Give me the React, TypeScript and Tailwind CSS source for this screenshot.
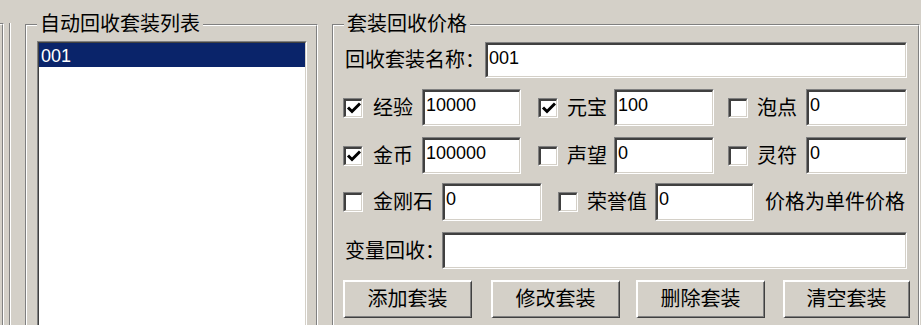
import type { ReactNode } from 'react';

const font = { fontFamily: "'Liberation Sans', 'Noto Sans CJK SC', sans-serif" };

function Sunken({ className = '', children }: { className?: string; children?: ReactNode }) {
  return (
    <div className={`border-t border-l border-b border-r border-t-[#808080] border-l-[#808080] border-b-white border-r-white ${className}`}>
      <div className="h-full w-full border-t-2 border-l-2 border-b border-r border-t-[#404040] border-l-[#404040] border-b-[#d4d0c8] border-r-[#d4d0c8] bg-white overflow-hidden">
        {children}
      </div>
    </div>
  );
}

function Field({ w, value = '' }: { w: string; value?: string }) {
  return (
    <Sunken className={`${w} h-full`}>
      <div className="pl-[1px] pt-[3px] text-[18px] leading-[21px] text-black">{value}</div>
    </Sunken>
  );
}

function CheckBox({ checked }: { checked?: boolean }) {
  return (
    <Sunken className="w-[20px] h-[20px] shrink-0">
      {checked && (
        <svg viewBox="0 0 16 16" className="w-[16px] h-[16px]">
          <path d="M2 6.5 L6 10.5 L14 2.5" fill="none" stroke="#000" strokeWidth="3" />
        </svg>
      )}
    </Sunken>
  );
}

function Button({ w, label, className = '' }: { w: string; label: string; className?: string }) {
  return (
    <div className={`${w} h-full border-t-2 border-l-2 border-b border-r border-t-white border-l-white border-b-[#404040] border-r-[#404040] ${className}`}>
      <div className="h-full w-full border-b border-r border-b-[#808080] border-r-[#808080] flex items-center justify-center text-[20px] text-black">
        {label}
      </div>
    </div>
  );
}

function Label({ w, text, className = '' }: { w: string; text: string; className?: string }) {
  return <div className={`${w} shrink-0 text-[20px] leading-[24px] text-black whitespace-nowrap ${className}`}>{text}</div>;
}

function GroupBox({ w, title, className = '', children }: { w: string; title: string; className?: string; children?: ReactNode }) {
  return (
    <div className={`relative ${w} mt-[24px] border-t border-l border-r border-t-[#808080] border-l-[#808080] border-r-white ${className}`}>
      <div className="absolute left-[11px] top-[-13px] px-[3px] bg-[#d4d0c8] text-[20px] leading-[24px] text-black z-10">{title}</div>
      <div className="h-full border-t border-l border-r border-t-white border-l-white border-r-[#808080]">{children}</div>
    </div>
  );
}

export default function App() {
  return (
    <div className="w-[921px] h-[325px] overflow-hidden bg-[#d4d0c8] flex" style={font}>
      {/* edge of the neighbouring panel */}
      <div className="w-[4px] mt-[23px] border-t border-r border-t-[#808080] border-r-white">
        <div className="h-full border-t border-r border-t-white border-r-[#808080]" />
      </div>
      <div className="w-[2px] ml-[5px] mt-[23px] border-l border-r border-l-[#808080] border-r-white" />

      {/* 自动回收套装列表 */}
      <GroupBox w="w-[293px]" title="自动回收套装列表" className="ml-[14px]">
        <div className="pl-[10px] pr-[9px] pt-[15px]">
          <div className="h-[300px] border-t border-l border-b border-r border-t-[#808080] border-l-[#808080] border-b-white border-r-white">
            <div className="h-full border-t border-l border-b border-r border-t-[#404040] border-l-[#404040] border-b-[#d4d0c8] border-r-[#d4d0c8] bg-white">
              <div className="h-[24px] bg-[#0a246a] text-white text-[18px] leading-[22px] pt-[2px] pl-[2px]">001</div>
            </div>
          </div>
        </div>
      </GroupBox>

      {/* 套装回收价格 */}
      <GroupBox w="w-[588px]" title="套装回收价格" className="ml-[14px]">
        <div className="pt-[16px] flex flex-col">
          <div className="flex items-center h-[36px]">
            <Label w="w-[140px]" text="回收套装名称：" className="ml-[11px]" />
            <Field w="w-[422px]" value="001" />
          </div>

          <div className="flex items-center h-[37px] mt-[11px]">
            <div className="ml-[9px]"><CheckBox checked /></div>
            <Label w="w-[59px]" text="经验" className="pl-[10px]" />
            <Field w="w-[99px]" value="10000" />
            <div className="ml-[17px]"><CheckBox checked /></div>
            <Label w="w-[56px]" text="元宝" className="pl-[9px]" />
            <Field w="w-[100px]" value="100" />
            <div className="ml-[14px]"><CheckBox /></div>
            <Label w="w-[58px]" text="泡点" className="pl-[9px]" />
            <Field w="w-[101px]" value="0" />
          </div>

          <div className="flex items-center h-[37px] mt-[11px]">
            <div className="ml-[9px]"><CheckBox checked /></div>
            <Label w="w-[59px]" text="金币" className="pl-[10px]" />
            <Field w="w-[99px]" value="100000" />
            <div className="ml-[17px]"><CheckBox /></div>
            <Label w="w-[56px]" text="声望" className="pl-[9px]" />
            <Field w="w-[100px]" value="0" />
            <div className="ml-[14px]"><CheckBox /></div>
            <Label w="w-[58px]" text="灵符" className="pl-[9px]" />
            <Field w="w-[101px]" value="0" />
          </div>

          <div className="flex items-center h-[38px] mt-[9px]">
            <div className="ml-[9px]"><CheckBox /></div>
            <Label w="w-[79px]" text="金刚石" className="pl-[10px]" />
            <Field w="w-[100px]" value="0" />
            <div className="ml-[16px]"><CheckBox /></div>
            <Label w="w-[77px]" text="荣誉值" className="pl-[9px]" />
            <Field w="w-[99px]" value="0" />
            <Label w="w-[150px]" text="价格为单件价格" className="ml-[11px]" />
          </div>

          <div className="flex items-center h-[37px] mt-[11px]">
            <Label w="w-[97px]" text="变量回收：" className="ml-[11px]" />
            <Field w="w-[465px]" />
          </div>

          <div className="flex h-[38px] mt-[11px]">
            <Button w="w-[129px]" label="添加套装" className="ml-[9px]" />
            <Button w="w-[129px]" label="修改套装" className="ml-[19px]" />
            <Button w="w-[129px]" label="删除套装" className="ml-[16px]" />
            <Button w="w-[127px]" label="清空套装" className="ml-[18px]" />
          </div>
        </div>
      </GroupBox>
    </div>
  );
}
